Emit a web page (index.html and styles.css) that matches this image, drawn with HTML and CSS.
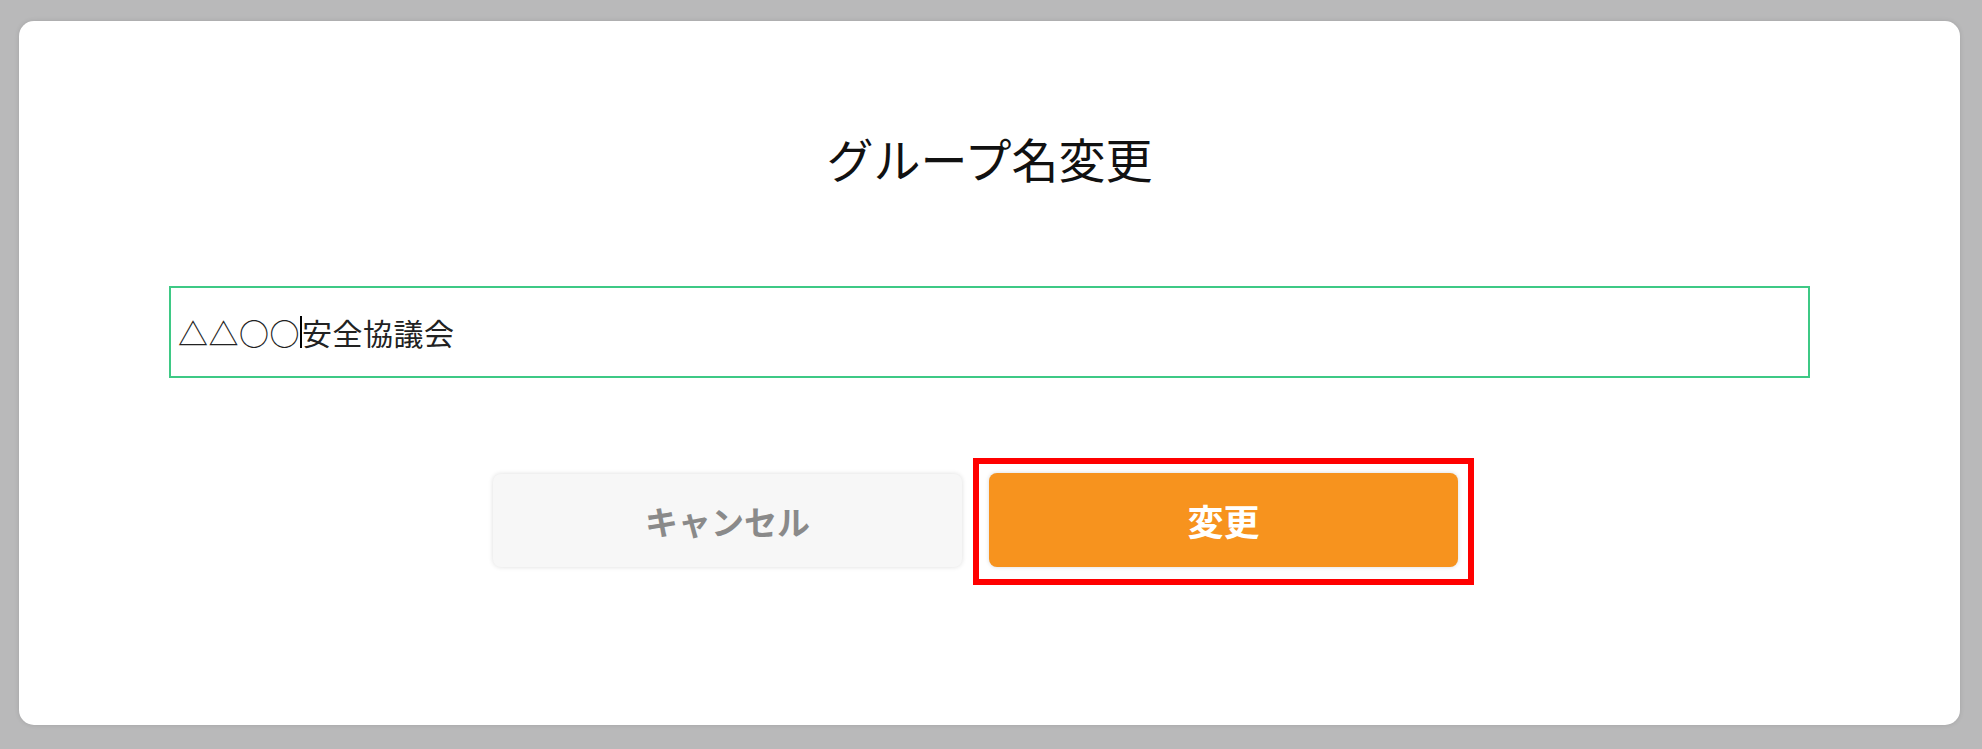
FILE: index.html
```html
<!DOCTYPE html>
<html lang="ja">
<head>
<meta charset="utf-8">
<title>グループ名変更</title>
<link rel="stylesheet" href="styles.css">
</head>
<body>
<div class="card">
  <h1 class="title">グループ名変更</h1>
  <div class="field"><span class="txt">△△○○</span><span class="caret"></span><span class="txt">安全協議会</span></div>
  <div class="actions">
    <button class="btn btn-cancel">キャンセル</button>
    <div class="highlight">
      <button class="btn btn-ok">変更</button>
    </div>
  </div>
</div>
</body>
</html>
```
FILE: styles.css
```css
html, body {
  margin: 0;
  padding: 0;
  background: #b9b9ba;
  font-family: "Noto Sans CJK JP", "Noto Sans", sans-serif;
}
body {
  padding: 21px 22px 24px 19px;
  height: 749px;
  box-sizing: border-box;
}
.card {
  background: #ffffff;
  border-radius: 15px;
  height: 704px;
  box-sizing: border-box;
  padding: 107px 150px 0 150px;
  box-shadow: 0 0 5px rgba(0,0,0,0.12);
}
.title {
  margin: 0;
  text-align: center;
  font-size: 47px;
  line-height: 60px;
  font-weight: 400;
  color: #111111;
}
.field {
  margin-top: 98px;
  height: 92px;
  box-sizing: border-box;
  border: 2px solid #3ec985;
  display: flex;
  align-items: center;
  padding-left: 7px;
  font-size: 30px;
  color: #222222;
}
.txt { line-height: 1; letter-spacing: 0.5px; }
.caret {
  display: inline-block;
  width: 2px;
  height: 32px;
  background: #000;
}
.actions {
  margin-top: 80px;
  display: flex;
  justify-content: center;
  align-items: flex-start;
  gap: 11px;
  padding-right: 12px;
}
.btn {
  border: none;
  border-radius: 8px;
  font-family: "Noto Sans CJK JP", "Noto Sans", sans-serif;
  font-weight: 700;
  font-size: 33px;
  height: 93px;
  cursor: pointer;
}
.btn-cancel {
  margin-top: 16px;
  width: 469px;
  background: #f7f7f7;
  color: #8a8a8a;
  box-shadow: 0 0 5px rgba(0,0,0,0.14);
}
.highlight {
  border: 6px solid #ff0000;
  padding: 9px 10px 12px 10px;
}
.btn-ok {
  display: block;
  width: 469px;
  height: 94px;
  background: #f7931e;
  color: #ffffff;
  font-size: 36px;
  box-shadow: 0 0 4px rgba(0,0,0,0.15);
}
```
